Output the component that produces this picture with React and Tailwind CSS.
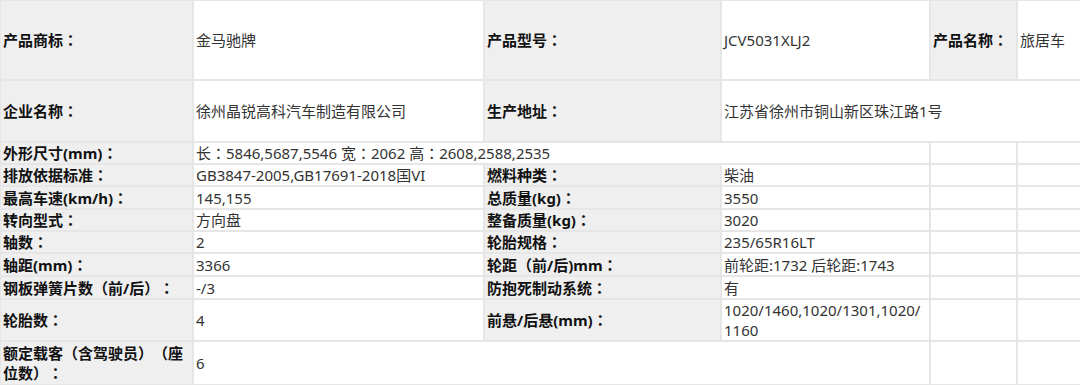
import React from "react";

const L = "bg-[#efefef] font-bold text-[#111] pl-[2px] pr-0 align-middle";
const V = "bg-white text-[#333] pl-[2px] pr-0 align-middle";
const E = "bg-white";
const B = "border-2 border-[#e6e6e6]";

function T({ s }) {
  const parts = s.split("：");
  return (
    <>
      {parts.map((p, i) => (
        <React.Fragment key={i}>
          {i > 0 && <span className="font-['Noto_Sans_CJK_JP',sans-serif]">：</span>}
          {p}
        </React.Fragment>
      ))}
    </>
  );
}

function Row({ h, label, value, label2, value2 }) {
  return (
    <tr style={{ height: h }}>
      <td className={`${B} ${L}`}><T s={label} /></td>
      <td className={`${B} ${V}`}>{value}</td>
      <td className={`${B} ${L}`}><T s={label2} /></td>
      <td className={`${B} ${V}`}>{value2}</td>
      <td className={`${B} ${E}`}></td>
      <td className={`${B} ${E}`}></td>
    </tr>
  );
}

export default function App() {
  return (
    <div className="w-[1080px] h-[385px] overflow-hidden bg-white text-[15px] leading-[20px] [text-spacing-trim:space-all] font-['Noto_Sans','Noto_Sans_CJK_SC',sans-serif]">
      <table className="border-collapse table-fixed w-[1084px] -ml-[1px] -mt-[1px]">
        <colgroup>
          <col className="w-[193px]" />
          <col className="w-[291px]" />
          <col className="w-[237px]" />
          <col className="w-[209px]" />
          <col className="w-[87px]" />
          <col className="w-[67px]" />
        </colgroup>
        <tbody>
          <tr className="h-[80px]">
            <td className={`${B} ${L}`}><T s="产品商标：" /></td>
            <td className={`${B} ${V}`}>金马驰牌</td>
            <td className={`${B} ${L}`}><T s="产品型号：" /></td>
            <td className={`${B} ${V}`}>JCV5031XLJ2</td>
            <td className={`${B} ${L}`}><T s="产品名称：" /></td>
            <td className={`${B} ${V}`}>旅居车</td>
          </tr>
          <tr className="h-[62px]">
            <td className={`${B} ${L}`}><T s="企业名称：" /></td>
            <td className={`${B} ${V}`}>徐州晶锐高科汽车制造有限公司</td>
            <td className={`${B} ${L}`}><T s="生产地址：" /></td>
            <td className={`${B} ${V}`} colSpan={3}>江苏省徐州市铜山新区珠江路1号</td>
          </tr>
          <tr className="h-[22px]">
            <td className={`${B} ${L}`}><T s="外形尺寸(mm)：" /></td>
            <td className={`${B} ${V} whitespace-nowrap`} colSpan={3}>
              <T s="长：5846,5687,5546 宽：2062 高：2608,2588,2535" />
            </td>
            <td className={`${B} ${E}`}></td>
            <td className={`${B} ${E}`}></td>
          </tr>
          <Row h={22} label="排放依据标准：" value="GB3847-2005,GB17691-2018国VI" label2="燃料种类：" value2="柴油" />
          <Row h={23} label="最高车速(km/h)：" value="145,155" label2="总质量(kg)：" value2="3550" />
          <Row h={22} label="转向型式：" value="方向盘" label2="整备质量(kg)：" value2="3020" />
          <Row h={22} label="轴数：" value="2" label2="轮胎规格：" value2="235/65R16LT" />
          <Row h={23} label="轴距(mm)：" value="3366" label2="轮距（前/后)mm：" value2="前轮距:1732 后轮距:1743" />
          <Row h={23} label="钢板弹簧片数（前/后）：" value="-/3" label2="防抱死制动系统：" value2="有" />
          <Row
            h={42}
            label="轮胎数："
            value="4"
            label2="前悬/后悬(mm)："
            value2={
              <>
                1020/1460,1020/1301,1020/
                <br />
                1160
              </>
            }
          />
          <tr className="h-[44px]">
            <td className={`${B} ${L}`}>
              额定载客（含驾驶员）（座
              <br />
              位数）<span className="font-['Noto_Sans_CJK_JP',sans-serif]">：</span>
            </td>
            <td className={`${B} ${V}`} colSpan={3}>6</td>
            <td className={`${B} ${E}`}></td>
            <td className={`${B} ${E}`}></td>
          </tr>
        </tbody>
      </table>
    </div>
  );
}
